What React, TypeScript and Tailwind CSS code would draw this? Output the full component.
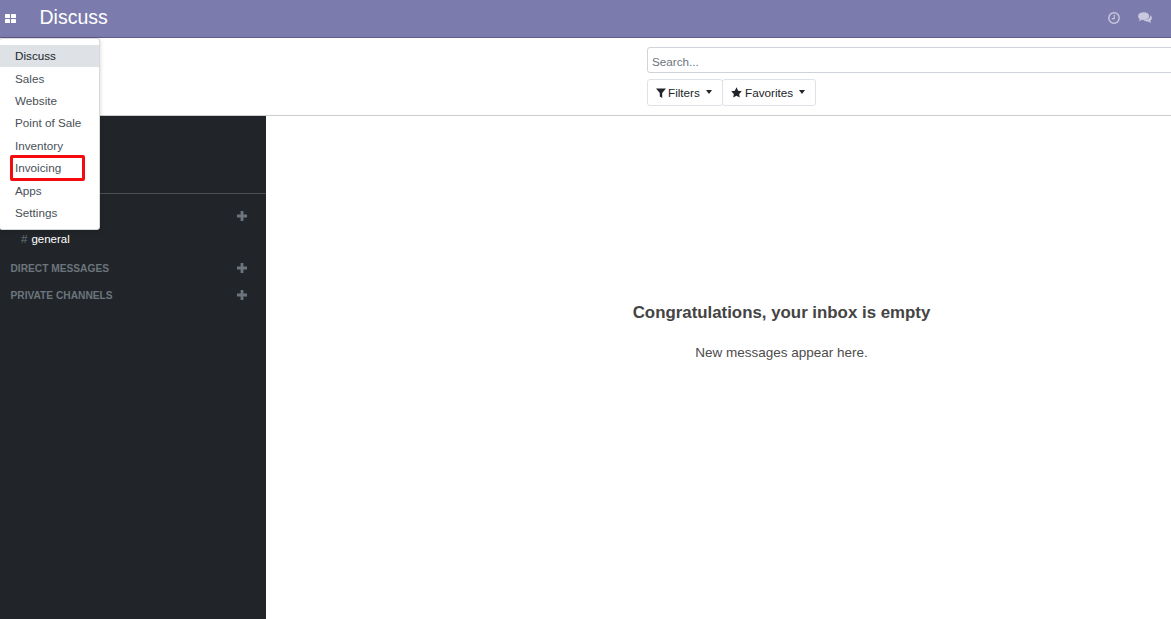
import React from "react";

const items = ["Discuss", "Sales", "Website", "Point of Sale", "Inventory", "Invoicing", "Apps", "Settings"];

function Plus() {
  return (
    <svg width="10" height="10" viewBox="0 0 10 10" className="mb-[2px] fill-[#6c757d]">
      <path d="M3.6 0h2.8v3.6H10v2.8H6.4V10H3.6V6.4H0V3.6h3.6z" />
    </svg>
  );
}

function Caret() {
  return <span className="mb-[2px] ml-[6px] inline-block h-0 w-0 border-x-[3.5px] border-t-[4px] border-x-transparent border-t-[#212529]" />;
}

function SectionRow({ label, className }: { label: string; className: string }) {
  return (
    <div className={`flex items-center justify-between pl-[10.5px] pr-[19.5px] text-[10.2px] font-bold text-[#6c757d] ${className}`}>
      <span>{label}</span>
      <Plus />
    </div>
  );
}

export default function App() {
  return (
    <div className="relative flex h-[619px] w-[1171px] flex-col overflow-hidden bg-white font-['Liberation_Sans',Arial,sans-serif] text-[13px] text-[#4c4c4c]">
      <header className="flex h-[38px] shrink-0 items-center border-b border-b-[#5f5b8a] bg-[#7c7bad] text-white">
        <svg width="11" height="9" viewBox="0 0 11 9" className="mb-[1px] ml-[5px] fill-white">
          <rect x="0" y="0" width="5" height="4" rx="0.6" />
          <rect x="6" y="0" width="5" height="4" rx="0.6" />
          <rect x="0" y="5" width="5" height="4" rx="0.6" />
          <rect x="6" y="5" width="5" height="4" rx="0.6" />
        </svg>
        <span className="mb-[2px] ml-[23.5px] text-[19.5px] leading-none">Discuss</span>
        <div className="mb-[2px] ml-auto mr-[19px] flex items-center gap-[18px]">
          <svg width="12" height="12" viewBox="0 0 12 12" fill="none" className="stroke-[#c9c8de]">
            <circle cx="6" cy="6" r="5.2" strokeWidth="1.4" />
            <path d="M6.3 2.8V6.6H3.8" strokeWidth="1.1" />
          </svg>
          <svg width="14" height="12" viewBox="0 0 15 13" className="fill-[#c9c8de]">
            <ellipse cx="6" cy="4.5" rx="6" ry="4.3" />
            <path d="M2 7l-1 3 4-2z" />
            <path d="M13.4 3.6c1 .8 1.6 1.8 1.6 2.9 0 1.2-.7 2.2-1.8 2.9l.8 2.6-3.4-1.8c-1.9.1-3.6-.5-4.6-1.6 3.9.2 7.6-1.7 7.4-5z" />
          </svg>
        </div>
      </header>

      <section className="flex h-[78px] shrink-0 border-b border-b-[#cccccc] pl-[647px] pt-[9px]">
        <div className="w-[560px] shrink-0">
          <div className="flex h-[26px] items-center rounded-[3px] border border-[#ced4da] pl-1 pt-[4px] text-[11.7px] text-[#6c757d]">Search...</div>
          <div className="mt-[6px] flex text-[11.7px]">
            <button className="flex h-[27px] w-[76px] items-center rounded-[3px] border border-[#dee2e6] pl-2 text-[#212529]">
              <svg width="10" height="10" viewBox="0 0 10 10" className="mr-[2px] fill-[#212529]">
                <path d="M0 .5h10L6.2 5v5L3.8 8.4V5z" />
              </svg>
              Filters
              <Caret />
            </button>
            <button className="-ml-px flex h-[27px] w-[94px] items-center rounded-[3px] border border-[#dee2e6] pl-2 text-[#212529]">
              <svg width="11" height="11" viewBox="0 0 12 12" className="mr-[3px] fill-[#212529]">
                <path d="M6 .4l1.8 3.7 4 .6-2.9 2.8.7 4L6 9.6l-3.6 1.9.7-4L.2 4.7l4-.6z" />
              </svg>
              Favorites
              <Caret />
            </button>
          </div>
        </div>
      </section>

      <div className="flex min-h-0 flex-1">
        <aside className="w-[266px] shrink-0 bg-[#212529]">
          <div className="h-[78px] border-b border-b-[#4b4f54]" />
          <SectionRow label="CHANNELS" className="mt-[16px] h-[14px]" />
          <div className="mt-[8px] flex h-[16px] items-center pl-[21px] text-[11.5px] text-white">
            <span className="mr-[4px] text-[#6c757d]">#</span>
            <span>general</span>
          </div>
          <SectionRow label="DIRECT MESSAGES" className="mt-[14px] h-[14px]" />
          <SectionRow label="PRIVATE CHANNELS" className="mt-[13px] h-[14px]" />
        </aside>
        <main className="w-[1031px] shrink-0 text-center">
          <h2 className="mt-[187px] text-[16.85px] font-bold leading-[20px] text-[#444444]">Congratulations, your inbox is empty</h2>
          <p className="mt-[21px] text-[13.5px] leading-[18px]">New messages appear here.</p>
        </main>
      </div>

      <nav className="absolute left-[-1px] top-[38px] h-[192px] w-[101px] rounded-[3px] border border-[#d9d9d9] bg-white pt-[5.8px] shadow-[0_1px_4px_rgba(0,0,0,0.18)]">
        {items.map((item) => (
          <div
            key={item}
            className={`flex h-[22.4px] items-center pl-[15px] text-[11.7px] ${item === "Discuss" ? "bg-[#dee2e6] text-[#212529]" : "text-[#495057]"} ${item === "Invoicing" ? "relative" : ""}`}
          >
            {item}
            {item === "Invoicing" && (
              <span className="absolute left-[10px] top-[-2px] h-[26px] w-[75px] rounded-[2px] border-[3px] border-[#f50a0f]" />
            )}
          </div>
        ))}
      </nav>
    </div>
  );
}
